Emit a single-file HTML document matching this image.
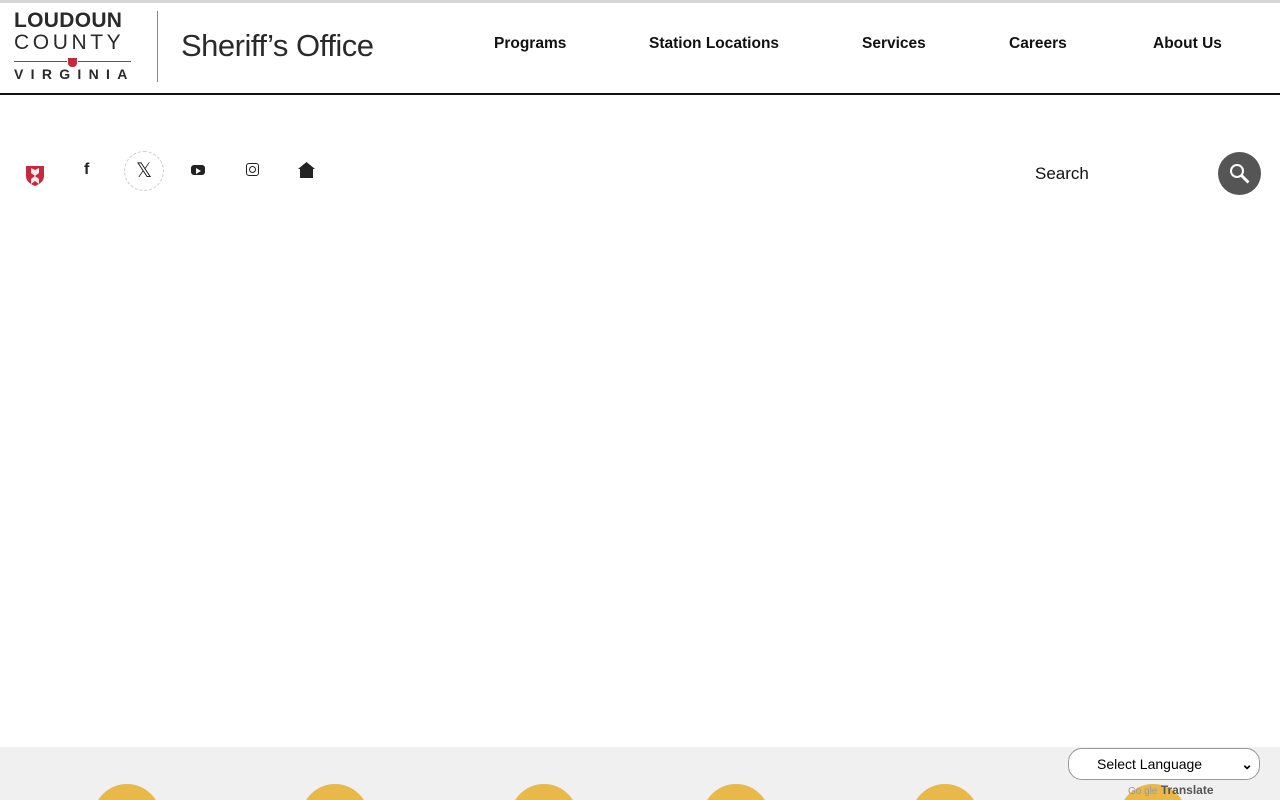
<!DOCTYPE html>
<html style="overflow:hidden;height:800px"><head><style>
body{margin:0;width:1280px;height:800px;overflow:hidden;background:#fff;font-family:"Liberation Sans",sans-serif;position:relative}
.a{position:absolute}
.nav{font-weight:bold;font-size:15.5px;color:#111;top:35px}
.circ{position:absolute;top:37px;width:68px;height:68px;border-radius:50%;background:#e8b84a}
</style></head><body>
<div class="a" style="top:0;left:0;width:1280px;height:3px;background:#d6d6d6"></div>
<div class="a" style="top:93px;left:0;width:1280px;height:2px;background:#111"></div>
<div class="a" style="left:14px;top:9px;font-size:21px;font-weight:bold;color:#2a2a2a;letter-spacing:0.3px">LOUDOUN</div>
<div class="a" style="left:14px;top:31px;font-size:21px;color:#2a2a2a;letter-spacing:3.6px">COUNTY</div>
<div class="a" style="left:14px;top:61px;width:117px;height:1px;background:#c8283c"></div>
<div class="a" style="left:67px;top:57px;width:9px;height:9px;background:#c8283c;border-radius:1px 1px 5px 5px;border:1px solid #fff"></div>
<div class="a" style="left:14px;top:66px;font-size:14px;font-weight:bold;color:#2a2a2a;letter-spacing:7.3px">VIRGINIA</div>
<div class="a" style="left:157px;top:11px;width:1px;height:71px;background:#888"></div>
<div class="a" style="left:181px;top:28px;font-size:31px;color:#2a2a2a;letter-spacing:-0.5px">Sheriff’s Office</div>
<div class="a nav" style="left:494px">Programs</div>
<div class="a nav" style="left:649px">Station Locations</div>
<div class="a nav" style="left:862px">Services</div>
<div class="a nav" style="left:1009px">Careers</div>
<div class="a nav" style="left:1153px">About Us</div>
<svg class="a" style="left:25px;top:165px" width="20" height="22" viewBox="0 0 20 22"><path d="M1 1h18v10c0 5-4 8-9 10C5 19 1 16 1 11z" fill="#c8283c"/><path d="M10 5l-4-2v5l4 3-4 3v5l4-3 4 3v-5l-4-3 4-3V3z" fill="#fff" opacity=".9"/></svg>
<div class="a" style="left:84px;top:161px;font-size:16px;font-weight:bold;color:#222">f</div>
<div class="a" style="left:124px;top:151px;width:38px;height:38px;border:1px dashed #ccc;border-radius:50%;text-align:center;line-height:38px;font-size:20px;color:#222">𝕏</div>
<div class="a" style="left:191px;top:165px;width:14px;height:10px;background:#222;border-radius:3px"></div>
<div class="a" style="left:196px;top:168px;width:0;height:0;border-left:5px solid #fff;border-top:3px solid transparent;border-bottom:3px solid transparent"></div>
<div class="a" style="left:246px;top:163px;width:11px;height:11px;border:1.5px solid #222;border-radius:3px"></div>
<div class="a" style="left:249px;top:166px;width:5px;height:5px;border:1.5px solid #222;border-radius:50%"></div>
<svg class="a" style="left:297px;top:161px" width="19" height="17" viewBox="0 0 19 17"><path d="M9.5 1L1 8h2v9h13V8h2z" fill="#222"/></svg>
<div class="a" style="left:1035px;top:164px;font-size:17px;color:#111">Search</div>
<div class="a" style="left:1218px;top:152px;width:43px;height:43px;border-radius:50%;background:#555"></div>
<svg class="a" style="left:1229px;top:163px" width="22" height="22" viewBox="0 0 22 22"><circle cx="8" cy="8" r="6" stroke="#fff" stroke-width="2" fill="none"/><path d="M12.5 12.5l7 7" stroke="#fff" stroke-width="3"/></svg>
<div class="a" style="left:0;top:747px;width:1280px;height:53px;background:#f0f0f0;overflow:hidden">
<div class="circ" style="left:93px"></div><div class="circ" style="left:301px"></div><div class="circ" style="left:510px"></div><div class="circ" style="left:702px"></div><div class="circ" style="left:911px"></div><div class="circ" style="left:1119px"></div>
</div>
<div class="a" style="left:1068px;top:748px;width:190px;height:30px;border:1px solid #999;border-radius:14px;background:#fff;font-size:14px;line-height:30px;text-indent:28px">Select Language<span style="position:absolute;right:6px;font-weight:bold">⌄</span></div>
<div class="a" style="left:1128px;top:783px;font-size:12px;color:#555"><span style="color:#999;font-size:10px">Go gle</span> <b>Translate</b></div>
</body></html>
